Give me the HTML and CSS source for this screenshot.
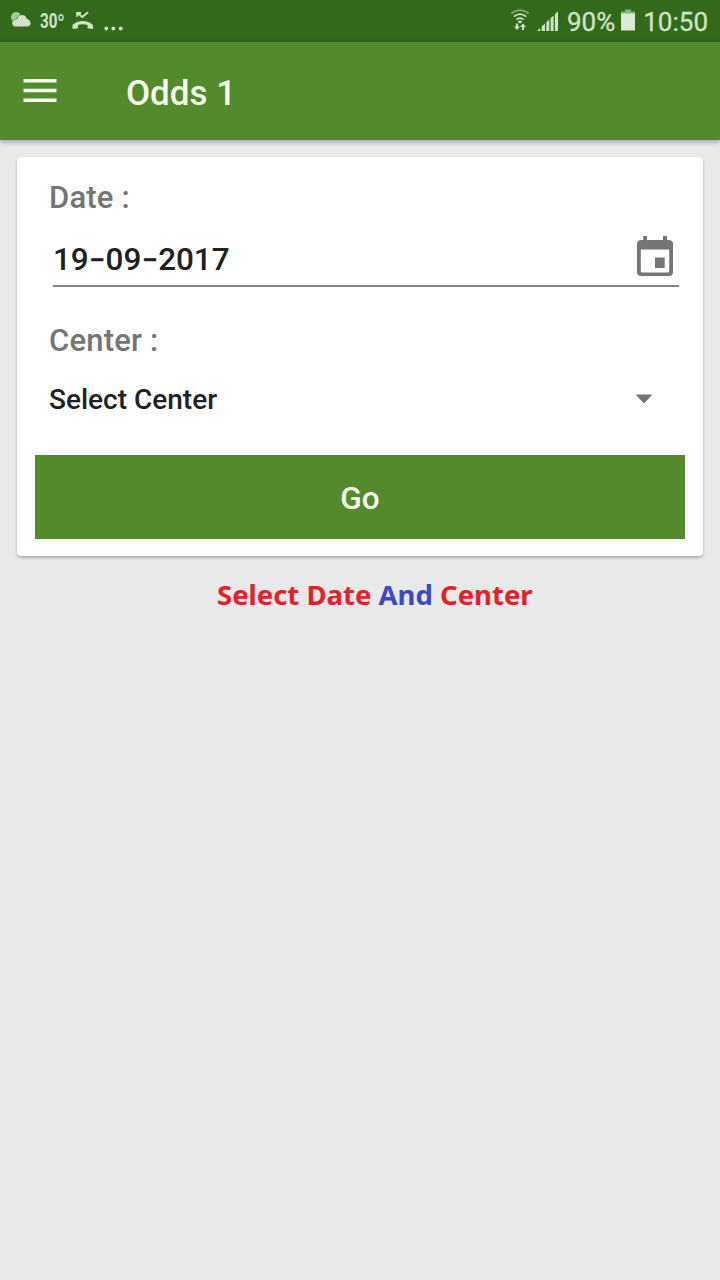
FILE: index.html
```html
<!DOCTYPE html>
<html lang="en">
<head>
<meta charset="utf-8">
<title>Odds 1</title>
<link rel="stylesheet" href="styles.css">
</head>
<body>
<div class="status">
  <div class="status-left">
    <svg class="cloud" width="21" height="16" viewBox="0 0 21 16"><path d="M1 8.500A5 5 0 0 1 9.500 2.200L5 7Z" fill="#a9c79d"/><path d="M4.200 14.500a3.400 3.400 0 0 1-.3-6.700C4.800 7.200 6 7 6.400 7C7 4.500 9 3 11.100 3C13.500 3 15.300 4.600 15.800 6.800C18.200 7.500 19.600 9.200 19.600 11.200C19.600 13.200 18.200 14.500 16.200 14.500Z" fill="#cfe3c6"/></svg>
    <span class="temp">30º</span>
    <svg class="missed" width="22" height="20" viewBox="0 0 22 20"><path d="M5.100 5.800V2H9M5.300 2L10.200 6L16 1.200" fill="none" stroke="#cfe3c6" stroke-width="1.900"/><path d="M.500 18V14C6 8.500 15.500 8.500 21 14V18L15.600 17.200V14C12.500 13 9 13 6 14V17.200Z" fill="#cfe3c6"/></svg>
    <svg class="dots" width="20" height="5" viewBox="0 0 20 5" fill="#cfe3c6"><circle cx="2.300" cy="2.500" r="1.900"/><circle cx="9.300" cy="2.500" r="1.900"/><circle cx="16.700" cy="2.500" r="1.900"/></svg>
  </div>
  <div class="status-right">
    <svg class="wifi" width="20" height="23" viewBox="0 0 20 23"><g fill="none" stroke="#cfe3c6" stroke-width="1.700"><path d="M1.200 4.500Q10 -2.300 18.800 4.500" stroke="#8cb17d"/><path d="M3.800 7.600Q10 2.500 16.200 7.600"/><path d="M6.300 10.600Q10 7.500 13.700 10.600"/></g><path d="M7.700 12.400Q10 10.800 12.300 12.400L10 14.800ZM6 14.500H8V17.500H10L7 21L4 17.500H6ZM12 21H14V18H16L13 14.500L10 18H12Z" fill="#cfe3c6"/></svg>
    <svg class="signal" width="22" height="22" viewBox="0 0 22 22" fill="#cfe3c6"><path d="M0 21L3.200 18V21ZM4.700 21V16.500L8 13.400V21ZM9.300 21V12.200L12.300 9.400V21ZM13.600 21V8.200L16.600 5.400V21ZM17.900 21V4.200L21 1.300V21Z"/></svg>
    <span class="percent">90%</span>
    <svg class="battery" width="14" height="22" viewBox="0 0 14 22"><path d="M4 .500H10V2.500H14V5H0V2.500H4Z" fill="#8cb17d"/><path d="M0 4.500H14V21.500H0Z" fill="#dcebd6"/></svg>
    <span class="clock">10:50</span>
  </div>
</div>
<header class="bar">
  <svg class="menu" width="34" height="24" viewBox="0 0 34 24" fill="#f6fff0"><path d="M.500 0H33.500V3.500H.500ZM.500 9.700H33.500V13.200H.500ZM.500 19.400H33.500V22.900H.500Z"/></svg>
  <h1 class="title">Odds 1</h1>
</header>
<main class="content">
  <section class="card">
    <div class="label date-label">Date :</div>
    <div class="field">
      <span class="date">19<span class="dash">–</span>09<span class="dash">–</span>2017</span>
      <svg class="calendar" width="38" height="42" viewBox="0 0 38 42"><path fill-rule="evenodd" d="M7.200 0H11V4H27V0H31V4H32.500Q37 4 37 8V36Q37 40 33 40H5Q1 40 1 36V8Q1 4 5.500 4H7.200ZM4.800 13.500V35Q4.800 36.500 6.300 36.500H31.700Q33.200 36.500 33.200 35V13.500ZM19 21.500H28.700V32H19Z" fill="#757575"/></svg>
    </div>
    <div class="label center-label">Center :</div>
    <div class="select"><span class="choice">Select Center</span><svg width="18" height="10" viewBox="0 0 18 10"><path d="M.500 .500H17.500L9 9.500Z" fill="#757575"/></svg></div>
    <button class="go" type="button">Go</button>
  </section>
  <p class="hint">Select Date <span class="and">And</span> Center</p>
</main>
</body>
</html>
```
FILE: styles.css
```css
* { box-sizing: border-box; }
body {
  margin: 0;
  min-height: 1280px;
  background: #e9e9e9;
  font-family: Roboto, "Liberation Sans", sans-serif;
  font-weight: 500;
}
svg { display: block; flex: none; }
span { white-space: nowrap; }
.status {
  display: flex;
  justify-content: space-between;
  height: 42px;
  background: #32691b;
  color: #cfe3c6;
}
.status-left, .status-right { display: flex; align-items: flex-start; }
.status-left { padding-left: 11px; }
.status-right { padding-right: 12px; font-weight: 400; font-size: 26px; line-height: 32px; -webkit-text-stroke: .3px #cfe3c6; }
.cloud { margin-top: 12px; }
.temp {
  width: 25px;
  margin: 9px 0 0 8px;
  font-family: Roboto, sans-serif;
  font-size: 20px;
  line-height: 25px;
  font-weight: 700;
  transform: scaleX(.76);
  transform-origin: left;
}
.missed { margin: 11px 0 0 7px; }
.dots { margin: 26px 0 0 10px; }
.wifi { margin-top: 9px; }
.signal { margin: 10px 0 0 7px; }
.percent { width: 49px; margin: 6px 0 0 8px; }
.battery { margin: 9px 0 0 5px; }
.clock { width: 65px; margin: 6px 0 0 8px; text-align: right; }
.bar {
  position: relative;
  display: flex;
  height: 98px;
  padding-left: 23px;
  background: #538a2b;
  color: #f6fff0;
  box-shadow: 0 2px 5px rgba(0, 0, 0, .32);
}
.menu { margin-top: 37px; }
.title { margin: 30px 0 0 69px; font-size: 35px; line-height: 44px; font-weight: 500; }
.content { padding: 17px 17px 0; }
.card {
  height: 399px;
  padding: 22px 18px 0;
  background: #fff;
  border-radius: 4px;
  box-shadow: 0 2px 3px rgba(0, 0, 0, .25);
}
.label { margin-left: 14px; color: #757575; font-size: 31px; line-height: 38px; letter-spacing: .2px; }
.field {
  display: flex;
  justify-content: space-between;
  height: 70px;
  margin: 0 6px 0 18px;
  border-bottom: 2px solid #858585;
}
.date { margin-top: 23px; font-size: 31.500px; line-height: 40px; color: #212121; letter-spacing: -.1px; }
.dash {
  display: inline-block;
  width: 17px;
  font-size: 23px;
  line-height: 24px;
  text-align: center;
  vertical-align: 2px;
  -webkit-text-stroke: .7px #212121;
}
.calendar { margin: 19px 5px 0 0; }
.center-label { margin-top: 35px; }
.select {
  display: flex;
  align-items: center;
  justify-content: space-between;
  height: 40px;
  margin: 19px 32px 0 14px;
  color: #212121;
  font-size: 28px;
}
.go {
  display: block;
  width: 100%;
  height: 84px;
  margin-top: 36px;
  padding: 2px 0 0;
  border: 0;
  background: #538a2b;
  color: #f6fff0;
  font: 500 31.500px Roboto, "Liberation Sans", sans-serif;
}
.hint {
  margin: 20px 0 0 200px;
  color: #e4202a;
  font-family: "Noto Sans", "Open Sans", sans-serif;
  font-size: 27.500px;
  line-height: 38px;
  font-weight: 700;
  white-space: nowrap;
}
.and { color: #4046c8; }
```
